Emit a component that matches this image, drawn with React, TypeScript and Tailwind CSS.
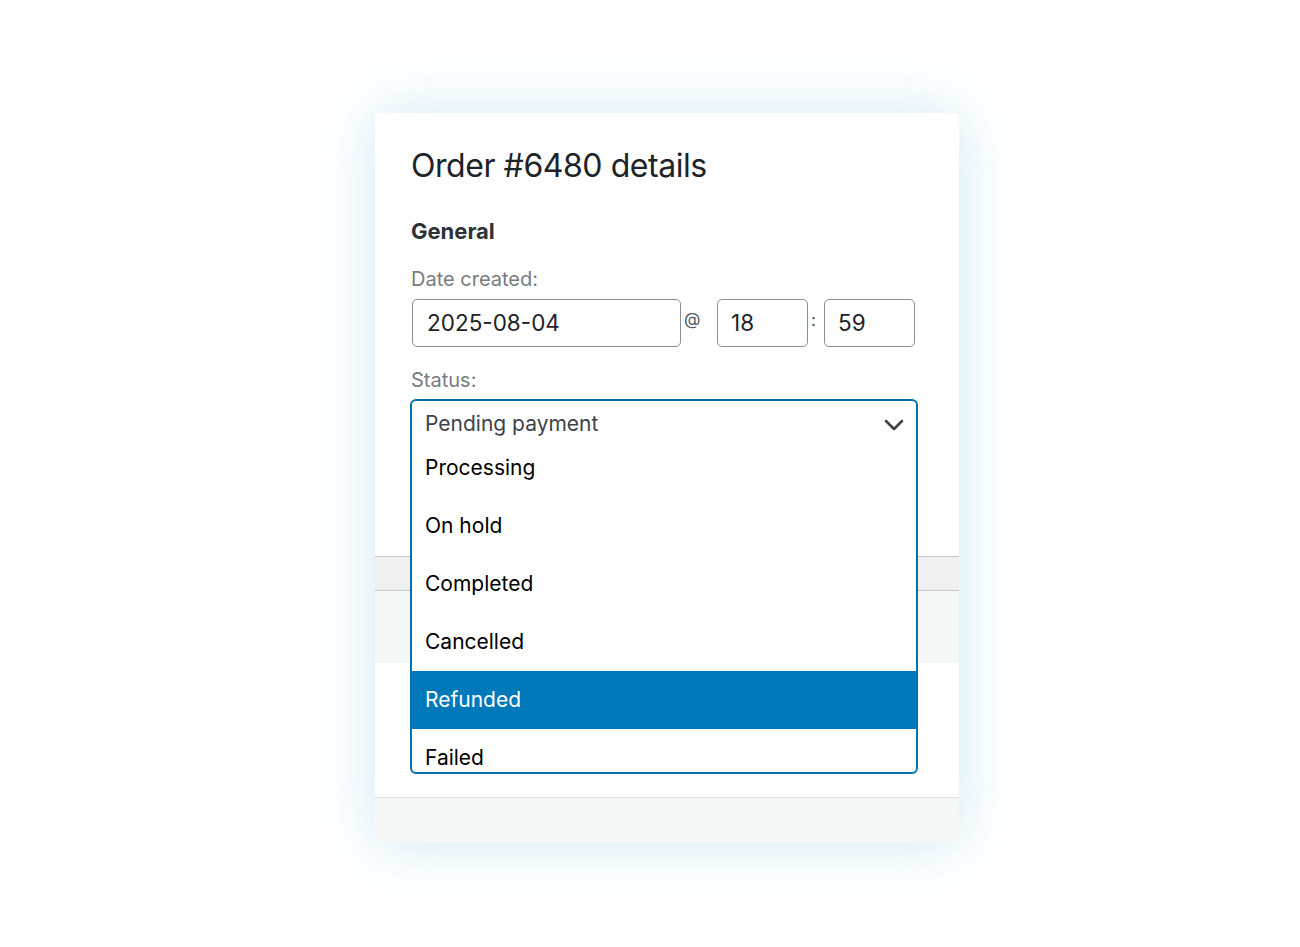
import { useState } from "react";

const statuses = ["Processing", "On hold", "Completed", "Cancelled", "Refunded", "Failed"];

const font = { fontFamily: "Inter, 'Liberation Sans', sans-serif" };

const App = () => {
  const [selected] = useState("Refunded");

  return (
    <div className="min-h-screen bg-white pt-[113px] pl-[375px]" style={font}>
      <div className="w-[584px] bg-white shadow-[0_0_55px_rgba(150,210,230,0.45)]">
        {/* general section */}
        <div className="px-[36px] pt-[33px] pb-[107px]">
          <h1 className="text-[32px] leading-[40px] font-normal text-[#1d2327] tracking-[-0.45px]">
            Order #6480 details
          </h1>
          <h3 className="mt-[31px] text-[22px] leading-[28px] font-bold text-[#2c3338]">General</h3>

          <div className="mt-[20px] text-[20px] leading-[28px] text-[#787c82]">Date created:</div>
          <div className="mt-[6px] flex items-center">
            <div className="ml-px w-[269px] h-[48px] rounded-[5px] border border-[#8c8f94] flex items-center px-[14px] text-[22.5px] text-[#1d2327]">
              2025-08-04
            </div>
            <span className="ml-[3px] mr-[15px] w-[18px] -mt-[6px] text-[17px] text-[#50575e]">@</span>
            <div className="w-[91px] h-[48px] rounded-[5px] border border-[#8c8f94] flex items-center px-[13px] text-[22.5px] text-[#1d2327]">
              18
            </div>
            <span className="ml-[3px] mr-[9px] w-[4px] -mt-[4px] text-[17px] text-[#50575e]">:</span>
            <div className="w-[91px] h-[48px] rounded-[5px] border border-[#8c8f94] flex items-center px-[13px] text-[22.5px] text-[#1d2327]">
              59
            </div>
          </div>

          <div className="mt-[19px] text-[20px] leading-[28px] text-[#787c82]">Status:</div>
          <div className="relative mt-[5px] -ml-px w-[508px] h-[50px]">
            <div className="absolute left-0 right-0 top-0 z-10 h-[375px] overflow-hidden rounded-[6px] border-2 border-[#0670ad] bg-white">
              <div className="h-[38px] flex items-start justify-between pl-[13px] pr-[12px] pt-[11px]">
                <span className="text-[21px] leading-[24px] text-[#3c434a]">Pending payment</span>
                <svg width="20" height="12" viewBox="0 0 20 12" className="mt-[7px]">
                  <polyline points="2,2 10,10 18,2" fill="none" stroke="#3c434a" strokeWidth="2.6" strokeLinecap="round" strokeLinejoin="round" />
                </svg>
              </div>
              {statuses.map((s) => (
                <div
                  key={s}
                  className={
                    s === selected
                      ? "h-[58px] flex items-center pl-[13px] bg-[#0079ba] text-white text-[21px]"
                      : "h-[58px] flex items-center pl-[13px] text-black text-[21px]"
                  }
                >
                  {s}
                </div>
              ))}
            </div>
          </div>
        </div>

        {/* panels under the dropdown */}
        <div className="h-[35px] bg-[#f0f0f1] border-t border-b border-[#c3c4c7]" />
        <div className="h-[72px] bg-[#f6f7f7]" />
        <div className="h-[134px] bg-white" />
        <div className="h-[46px] bg-[#f6f7f7] border-t border-[#e0e0e0]" />
      </div>
    </div>
  );
};

export default App;
